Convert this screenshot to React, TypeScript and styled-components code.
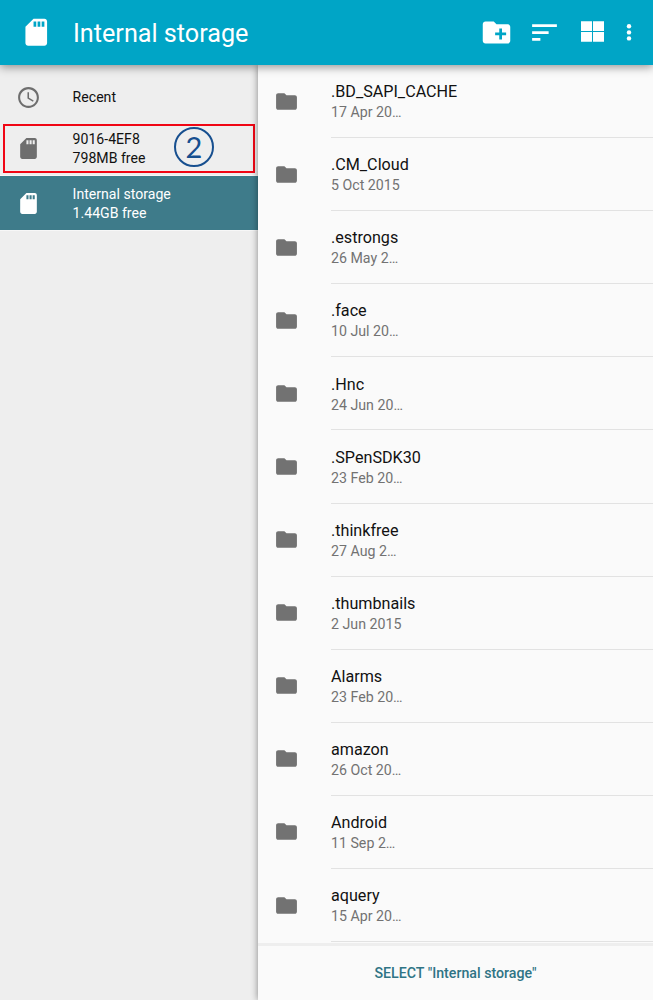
import React from 'react';
import styled, { createGlobalStyle } from 'styled-components';

const GlobalStyle = createGlobalStyle`
  * { box-sizing: border-box; }
  body { margin: 0; background: #fafafa; font-family: Roboto, "Liberation Sans", sans-serif; }
  svg { display: block; flex: none; fill: currentColor; }
`;

const Screen = styled.div`
  display: flex;
  flex-direction: column;
  width: 653px;
  height: 1000px;
  overflow: hidden;
`;

const Toolbar = styled.header`
  position: relative;
  z-index: 2;
  flex: none;
  display: flex;
  align-items: center;
  height: 65px;
  padding: 0 20px 0 20px;
  background: #00a5c6;
  color: #fff;
  box-shadow: 0 2px 9px rgba(0, 0, 0, 0.42);
`;

const Title = styled.h1`
  flex: 1;
  margin: 2px 0 0 20.5px;
  font-size: 25.2px;
  font-weight: 400;
  line-height: 32px;
  white-space: nowrap;
`;

const Actions = styled.div`
  display: flex;
  align-items: center;
  gap: 15.4px;
`;

const Body = styled.div`
  flex: 1;
  display: flex;
  min-height: 0;
`;

const Sidebar = styled.nav`
  width: 258px;
  flex: none;
  background: #eeeeee;
`;

const Root = styled.div<{ $height: number; $active?: boolean }>`
  display: flex;
  align-items: center;
  height: ${(p) => p.$height}px;
  padding-left: 15.6px;
  gap: 32px;
  font-size: 14.1px;
  line-height: 19px;
  white-space: nowrap;
  color: ${(p) => (p.$active ? '#fff' : '#111')};
  background: ${(p) => (p.$active ? '#3e7b8a' : 'transparent')};
  box-shadow: ${(p) => (p.$active ? '0 0 0 1px #f7f7f7' : 'none')};
  svg { color: ${(p) => (p.$active ? '#fff' : '#6e6e6e')}; }
  span { padding-top: 2px; }
`;

const Recent = styled(Root)`
  padding-top: 5px;
  span { padding-top: 0; }
`;

const Callout = styled.div`
  position: relative;
  width: 252px;
  height: 49px;
  margin: 0 0 3px 3px;
  border: 2px solid #f00614;
  display: flex;
  align-items: center;
  ${Root} { margin-left: -5px; }
  ${Root} > span { padding-top: 0; }
`;

const Step = styled.span`
  position: absolute;
  left: 169px;
  top: 1px;
  width: 40px;
  height: 40px;
  border: 2px solid #174f8f;
  border-radius: 50%;
  color: #174f8f;
  font: 29px/36px Lato, "Open Sans", sans-serif;
  text-align: center;
`;

const Main = styled.main`
  position: relative;
  z-index: 1;
  flex: 1;
  display: flex;
  flex-direction: column;
  min-width: 0;
  background: #fafafa;
  box-shadow: 0 0 7px rgba(0, 0, 0, 0.45);
`;

const Files = styled.div`
  height: 878px;
  flex: none;
`;

const FileRow = styled.div`
  display: flex;
  align-items: center;
  height: 73.1px;
  padding-left: 15.7px;
  color: #727272;
  svg { margin-bottom: 1px; }
`;

const FileText = styled.div`
  flex: 1;
  height: 100%;
  margin-left: 32.3px;
  padding-top: 16.2px;
  border-bottom: 1px solid #e2e2e2;
`;

const FileName = styled.div`
  font-size: 16.15px;
  line-height: 21px;
  color: #111;
`;

const FileDate = styled.div`
  font-size: 14.2px;
  line-height: 20px;
`;

const Footer = styled.footer`
  flex: 1;
  display: flex;
  align-items: center;
  justify-content: center;
  border-top: 3px solid #eeeeee;
`;

const SelectButton = styled.button`
  border: 0;
  padding: 0;
  background: none;
  color: #2f7485;
  font: 500 14.2px/20px Roboto, sans-serif;
`;

const SdCard = ({ size }: { size: number }) => (
  <svg width={size} height={size} viewBox="0 0 24 24">
    <path d="M18 2h-8L4.02 8 4 20c0 1.1.9 2 2 2h12c1.1 0 2-.9 2-2V4c0-1.1-.9-2-2-2zm-6 6h-2V4h2v4zm3 0h-2V4h2v4zm3 0h-2V4h2v4z" />
  </svg>
);

const Clock = () => (
  <svg width="25" height="25" viewBox="0 0 24 24">
    <path d="M11.99 2C6.47 2 2 6.48 2 12s4.47 10 9.99 10C17.52 22 22 17.52 22 12S17.52 2 11.99 2zM12 20c-4.42 0-8-3.58-8-8s3.58-8 8-8 8 3.58 8 8-3.58 8-8 8zm.5-13H11v6l5.25 3.15.75-1.23-4.5-2.67z" />
  </svg>
);

const Folder = () => (
  <svg width="25" height="25" viewBox="0 0 24 24">
    <path d="M10 4H4c-1.1 0-1.99.9-1.99 2L2 18c0 1.1.9 2 2 2h16c1.1 0 2-.9 2-2V8c0-1.1-.9-2-2-2h-8l-2-2z" />
  </svg>
);

const NewFolder = () => (
  <svg width="33" height="33" viewBox="0 0 24 24">
    <path d="M20 6h-8l-2-2H4c-1.11 0-1.99.89-1.99 2L2 18c0 1.11.89 2 2 2h16c1.11 0 2-.89 2-2V8c0-1.11-.89-2-2-2zm-1 8h-3v3h-2v-3h-3v-2h3V9h2v3h3v2z" />
  </svg>
);

const Sort = () => (
  <svg width="33" height="33" viewBox="0 0 24 24">
    <path d="M3 18h6v-2H3v2zM3 6v2h18V6H3zm0 7h12v-2H3v2z" />
  </svg>
);

const Grid = () => (
  <svg width="33" height="33" viewBox="0 0 33 33">
    <path d="M4 5.2h11v9.8H4zM16 5.2h11v9.8H16zM4 16h11v9.8H4zM16 16h11v9.8H16z" />
  </svg>
);

const More = () => (
  <svg width="8" height="33" viewBox="0 0 8 33">
    <circle cx="4" cy="10.3" r="2.2" />
    <circle cx="4" cy="16.4" r="2.2" />
    <circle cx="4" cy="22.4" r="2.2" />
  </svg>
);

const files: [string, string][] = [
  ['.BD_SAPI_CACHE', '17 Apr 20…'],
  ['.CM_Cloud', '5 Oct 2015'],
  ['.estrongs', '26 May 2…'],
  ['.face', '10 Jul 20…'],
  ['.Hnc', '24 Jun 20…'],
  ['.SPenSDK30', '23 Feb 20…'],
  ['.thinkfree', '27 Aug 2…'],
  ['.thumbnails', '2 Jun 2015'],
  ['Alarms', '23 Feb 20…'],
  ['amazon', '26 Oct 20…'],
  ['Android', '11 Sep 2…'],
  ['aquery', '15 Apr 20…'],
];

export default function App() {
  return (
    <Screen>
      <GlobalStyle />
      <Toolbar>
        <SdCard size={32.5} />
        <Title>Internal storage</Title>
        <Actions>
          <NewFolder />
          <Sort />
          <Grid />
          <More />
        </Actions>
      </Toolbar>
      <Body>
        <Sidebar>
          <Recent $height={59}>
            <Clock />
            <span>Recent</span>
          </Recent>
          <Callout>
            <Root $height={46}>
              <SdCard size={25} />
              <span>9016-4EF8<br />798MB free</span>
            </Root>
            <Step>2</Step>
          </Callout>
          <Root $height={54} $active>
            <SdCard size={25} />
            <span>Internal storage<br />1.44GB free</span>
          </Root>
        </Sidebar>
        <Main>
          <Files>
            {files.map(([name, date]) => (
              <FileRow key={name}>
                <Folder />
                <FileText>
                  <FileName>{name}</FileName>
                  <FileDate>{date}</FileDate>
                </FileText>
              </FileRow>
            ))}
          </Files>
          <Footer>
            <SelectButton>SELECT "Internal storage"</SelectButton>
          </Footer>
        </Main>
      </Body>
    </Screen>
  );
}
